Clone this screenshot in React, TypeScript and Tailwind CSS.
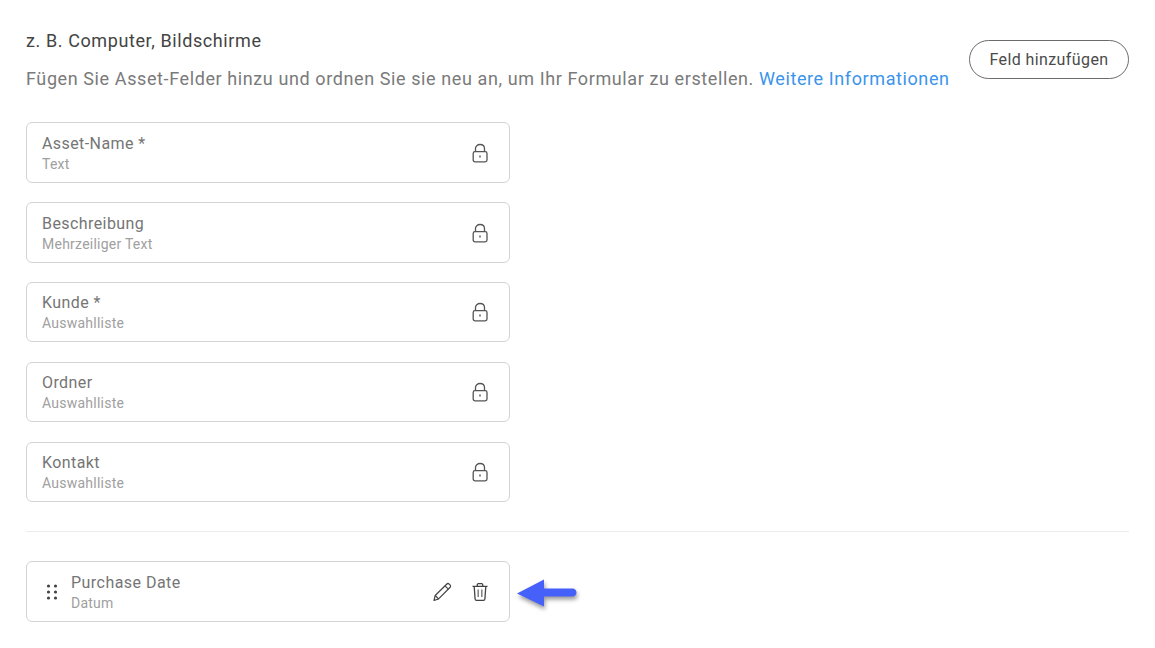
import React from "react";

function Lock() {
  return (
    <svg width="18" height="20" viewBox="0 0 18 20" fill="none" className="shrink-0">
      <path d="M4.5 9V5.6C4.5 3.2 6.4 1.5 9 1.5s4.5 1.7 4.5 4.1V9" stroke="#555" strokeWidth="1.3" />
      <rect x="2.2" y="8.6" width="13.8" height="10.2" rx="1.8" stroke="#555" strokeWidth="1.3" />
      <path d="M9 12.6v1.8" stroke="#444" strokeWidth="1.3" />
    </svg>
  );
}

function Pencil() {
  return (
    <svg width="22" height="22" viewBox="0 0 22 22" fill="none">
      <path d="M3 19.5l1.2-5L15.6 3.2c.8-.8 1.9-.8 2.6-.1l.8.8c.7.7.7 1.8-.1 2.6L7.6 17.9 3 19.5z" stroke="#444" strokeWidth="1.2" strokeLinejoin="round" />
      <path d="M4.2 14.5l3.4 3.4M14 4.8l3.3 3.3" stroke="#444" strokeWidth="1.2" />
    </svg>
  );
}

function Trash() {
  return (
    <svg width="18" height="20" viewBox="0 0 18 20" fill="none">
      <path d="M1.5 4.4h15M6.3 4.2V2.6c0-.6.4-1 1-1h3.4c.6 0 1 .4 1 1v1.6" stroke="#444" strokeWidth="1.3" />
      <path d="M3.2 4.6l.9 12.4c.1.8.6 1.3 1.4 1.3h7c.8 0 1.3-.5 1.4-1.3l.9-12.4" stroke="#444" strokeWidth="1.3" />
      <path d="M7.2 7.5v7.5M10.8 7.5v7.5" stroke="#777" strokeWidth="1.4" />
    </svg>
  );
}

function Grip() {
  return (
    <svg width="12" height="18" viewBox="0 0 12 18" fill="#444" className="shrink-0">
      <circle cx="2.5" cy="3" r="1.6" />
      <circle cx="9.5" cy="3" r="1.6" />
      <circle cx="2.5" cy="9" r="1.6" />
      <circle cx="9.5" cy="9" r="1.6" />
      <circle cx="2.5" cy="15" r="1.6" />
      <circle cx="9.5" cy="15" r="1.6" />
    </svg>
  );
}

function Arrow() {
  return (
    <svg width="70" height="40" viewBox="0 0 70 40" fill="none" className="shrink-0 drop-shadow-[1px_3px_2px_rgba(0,0,0,0.4)]">
      <path d="M2 16.5L29 2.5V11.5H57.5C60 11.5 61.5 13.5 61.5 15.5C61.5 17.7 60 19.5 57.5 19.5H29V29.5Z" fill="#4660fa" />
    </svg>
  );
}

function Field({ name, type, tall }: { name: string; type: string; tall?: boolean }) {
  return (
    <div className={tall ? "w-[484px] h-[61px] mb-[19px] border border-[#d4d4d4] rounded-[6px] bg-white pl-[15px] pr-[20.5px] flex items-center justify-between" : "w-[484px] h-[60px] mb-[20px] border border-[#d4d4d4] rounded-[6px] bg-white pl-[15px] pr-[20.5px] flex items-center justify-between"}>
      <div className="flex flex-col pt-[2px]">
        <span className="text-[16px] leading-[20px] tracking-[0.42px] text-[#757575]">{name}</span>
        <span className="text-[14px] leading-[20px] tracking-[0.24px] text-[#a0a0a0]">{type}</span>
      </div>
      <Lock />
    </div>
  );
}

export default function App() {
  return (
    <div className="w-[1155px] h-[648px] bg-white overflow-hidden px-[26px] pt-[28px] font-['Roboto',sans-serif]">
      <div className="flex items-center justify-between">
        <div>
          <div className="text-[18px] leading-[26px] tracking-[0.6px] text-[#444444]">z. B. Computer, Bildschirme</div>
          <div className="mt-[12px] text-[18px] leading-[26px] tracking-[0.6px] text-[#7a7a7a]">
            Fügen Sie Asset-Felder hinzu und ordnen Sie sie neu an, um Ihr Formular zu erstellen.{" "}
            <span className="text-[#3b94ea]">Weitere Informationen</span>
          </div>
        </div>
        <button className="w-[160px] h-[39px] mt-[-2px] pt-[1px] border border-[#6b6b6b] rounded-full text-[16px] tracking-[0.4px] text-[#4a4a4a] bg-white">
          Feld hinzufügen
        </button>
      </div>
      <div className="mt-[30px] flex flex-col">
        <Field name="Asset-Name *" type="Text" tall />
        <Field name="Beschreibung" type="Mehrzeiliger Text" tall />
        <Field name="Kunde *" type="Auswahlliste" />
        <Field name="Ordner" type="Auswahlliste" />
        <Field name="Kontakt" type="Auswahlliste" />
      </div>
      <div className="mt-[9px] border-t border-[#ececec]" />
      <div className="mt-[29px] flex items-center">
        <div className="w-[484px] h-[61px] border border-[#d4d4d4] rounded-[6px] bg-white pl-[19px] pr-[20.5px] flex items-center">
          <Grip />
          <div className="flex flex-col ml-[13px] pt-[2px]">
            <span className="text-[16px] leading-[20px] tracking-[0.46px] text-[#757575]">Purchase Date</span>
            <span className="text-[14px] leading-[20px] tracking-[0.24px] text-[#a0a0a0]">Datum</span>
          </div>
          <div className="ml-auto flex items-center gap-[18px]">
            <Pencil />
            <Trash />
          </div>
        </div>
        <div className="ml-[5px] mt-[10px]">
          <Arrow />
        </div>
      </div>
    </div>
  );
}
